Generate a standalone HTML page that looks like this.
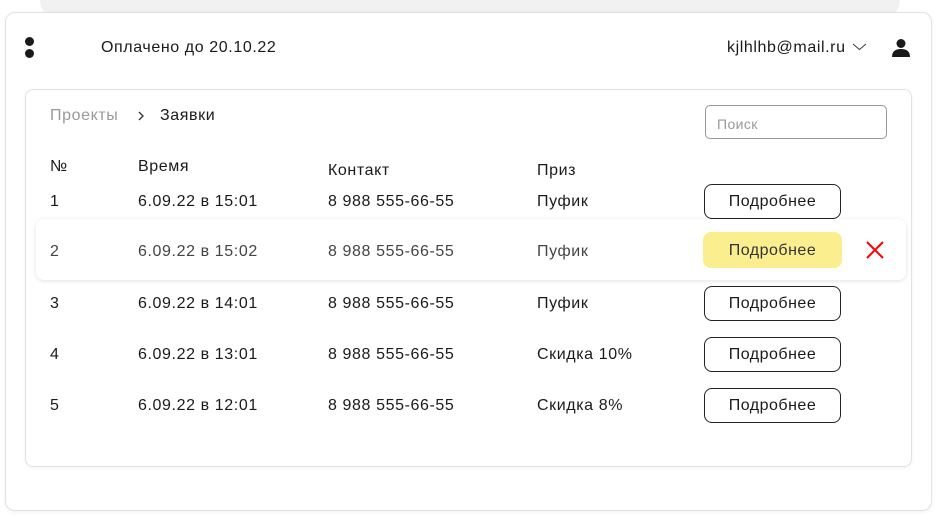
<!DOCTYPE html>
<html><head><meta charset="utf-8"><style>
*{margin:0;padding:0;box-sizing:border-box}
body{width:937px;height:516px;background:#fff;font-family:"Liberation Sans",sans-serif;color:#1a1a1a;position:relative;overflow:hidden}
.abs{position:absolute}
.back{left:40px;top:-20px;width:860px;height:40px;background:#f1f1f1;border-radius:30px}
.card{left:5px;top:12px;width:927px;height:499px;background:#fff;border:1px solid #e2e2e2;border-radius:10px;box-shadow:0 1px 4px rgba(0,0,0,.06)}
.inner{left:25px;top:89px;width:887px;height:378px;border:1px solid #e2e2e2;border-radius:8px;box-shadow:0 1px 4px rgba(0,0,0,.05)}
.t{position:absolute;font-size:16px;line-height:20px;white-space:nowrap;letter-spacing:0.6px}
.btn{position:absolute;left:704px;width:137px;height:35px;border:1px solid #222;border-radius:8px;font-size:16px;line-height:33px;text-align:center;letter-spacing:0.5px}
.dot{position:absolute;left:25px;width:9px;height:9px;border-radius:50%;background:#1a1a1a}
</style></head><body>
<div class="abs back"></div>
<div class="abs card"></div>
<div class="dot" style="top:37px"></div>
<div class="dot" style="top:49px"></div>
<div class="t" style="left:101px;top:38px">Оплачено до 20.10.22</div>
<div class="t" style="left:727px;top:38px">kjlhlhb@mail.ru</div>
<svg class="abs" style="left:851px;top:41px" width="18" height="12"><path d="M2 3 L8.5 8.5 L15 3" fill="none" stroke="#444" stroke-width="1.1"/></svg>
<svg class="abs" style="left:891px;top:38px" width="20" height="20"><circle cx="10" cy="5.5" r="4.5" fill="#1a1a1a"/><path d="M1 19 Q1 11 10 11 Q19 11 19 19 Z" fill="#1a1a1a"/></svg>
<div class="abs inner"></div>
<div class="t" style="left:50px;top:106px;color:#999">Проекты</div>
<svg class="abs" style="left:136px;top:109px" width="10" height="14"><path d="M3 3 L7 7 L3 11" fill="none" stroke="#333" stroke-width="1.3"/></svg>
<div class="t" style="left:160px;top:106px">Заявки</div>
<div class="abs" style="left:705px;top:105px;width:182px;height:34px;border:1px solid #999;border-radius:5px"></div>
<div class="t" style="left:717px;top:114px;font-size:14px;color:#999;letter-spacing:0.4px">Поиск</div>
<div class="t" style="left:50px;top:157px">№</div>
<div class="t" style="left:138px;top:157px">Время</div>
<div class="t" style="left:328px;top:161px">Контакт</div>
<div class="t" style="left:537px;top:161px">Приз</div>

<div class="t" style="left:50px;top:192px">1</div>
<div class="t" style="left:138px;top:192px">6.09.22 в 15:01</div>
<div class="t" style="left:328px;top:192px">8 988 555-66-55</div>
<div class="t" style="left:537px;top:192px">Пуфик</div>
<div class="btn" style="top:184px">Подробнее</div>

<div class="abs" style="left:36px;top:219px;width:870px;height:61px;background:#fff;border-radius:8px;box-shadow:0 1px 5px rgba(0,0,0,.12)"></div>
<div class="t" style="left:50px;top:242px;color:#444">2</div>
<div class="t" style="left:138px;top:242px;color:#444">6.09.22 в 15:02</div>
<div class="t" style="left:328px;top:242px;color:#444">8 988 555-66-55</div>
<div class="t" style="left:537px;top:242px;color:#444">Пуфик</div>
<div class="btn" style="top:232px;left:703px;width:139px;height:36px;border:none;background:#fbee8f;line-height:37px;color:#333">Подробнее</div>
<svg class="abs" style="left:865px;top:240px" width="20" height="20"><path d="M2 2 L18 18 M18 2 L2 18" stroke="#f00" stroke-width="2"/></svg>

<div class="t" style="left:50px;top:294px">3</div>
<div class="t" style="left:138px;top:294px">6.09.22 в 14:01</div>
<div class="t" style="left:328px;top:294px">8 988 555-66-55</div>
<div class="t" style="left:537px;top:294px">Пуфик</div>
<div class="btn" style="top:286px">Подробнее</div>

<div class="t" style="left:50px;top:345px">4</div>
<div class="t" style="left:138px;top:345px">6.09.22 в 13:01</div>
<div class="t" style="left:328px;top:345px">8 988 555-66-55</div>
<div class="t" style="left:537px;top:345px">Скидка 10%</div>
<div class="btn" style="top:337px">Подробнее</div>

<div class="t" style="left:50px;top:396px">5</div>
<div class="t" style="left:138px;top:396px">6.09.22 в 12:01</div>
<div class="t" style="left:328px;top:396px">8 988 555-66-55</div>
<div class="t" style="left:537px;top:396px">Скидка 8%</div>
<div class="btn" style="top:388px">Подробнее</div>
</body></html>
